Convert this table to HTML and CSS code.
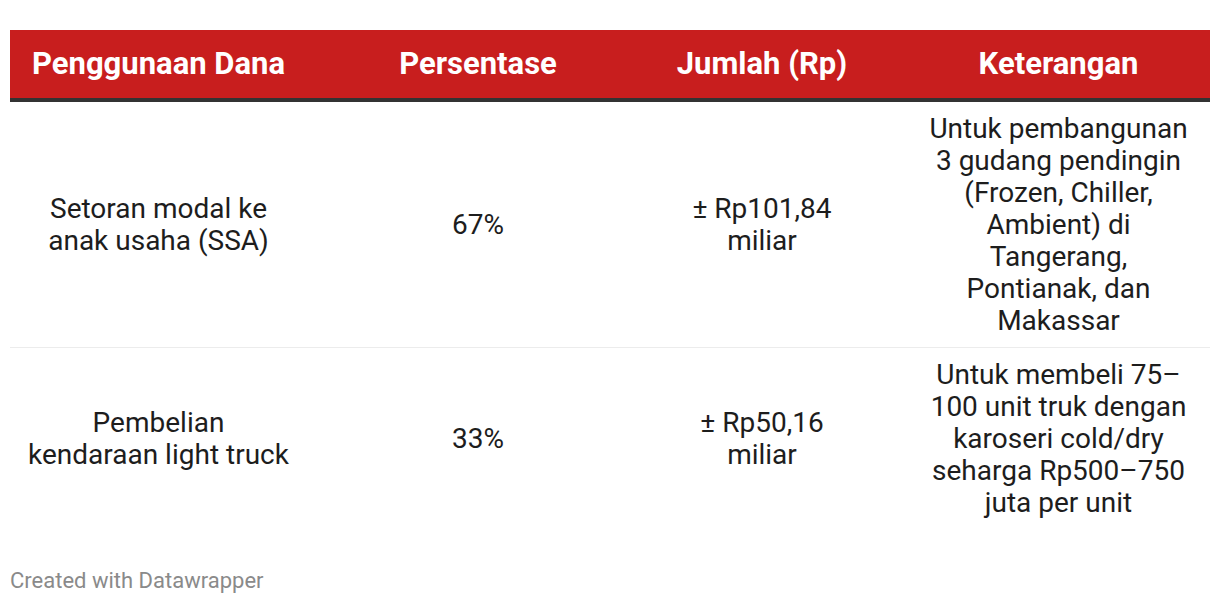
FILE: index.html
```html
<!DOCTYPE html>
<html lang="id">
<head>
<meta charset="utf-8">
<title>Penggunaan Dana</title>
<link rel="stylesheet" href="styles.css">
</head>
<body>
<div class="chart">
  <div class="table">
    <div class="row head">
      <div class="cell c1">Penggunaan Dana</div>
      <div class="cell c2">Persentase</div>
      <div class="cell c3">Jumlah (Rp)</div>
      <div class="cell c4">Keterangan</div>
    </div>
    <div class="row body-row first">
      <div class="cell c1">Setoran modal ke anak usaha (SSA)</div>
      <div class="cell c2">67%</div>
      <div class="cell c3">± Rp101,84 miliar</div>
      <div class="cell c4">Untuk pembangunan 3 gudang pendingin (Frozen, Chiller, Ambient) di Tangerang, Pontianak, dan Makassar</div>
    </div>
    <div class="row body-row">
      <div class="cell c1">Pembelian kendaraan light truck</div>
      <div class="cell c2">33%</div>
      <div class="cell c3">± Rp50,16 miliar</div>
      <div class="cell c4">Untuk membeli 75–100 unit truk dengan karoseri cold/dry seharga Rp500–750 juta per unit</div>
    </div>
  </div>
  <div class="footer">Created with Datawrapper</div>
</div>
</body>
</html>
```

FILE: styles.css
```css
html, body {
  margin: 0;
  padding: 0;
  background: #ffffff;
}

body {
  font-family: Roboto, "Liberation Sans", Arial, sans-serif;
  color: #1d1d1d;
}

.chart {
  padding: 30px 10px 0 10px;
  width: 1200px;
}

.table {
  width: 1200px;
}

.row {
  display: grid;
  grid-template-columns: 297px 342px 226px 335px;
  align-items: center;
}

.cell {
  text-align: center;
  box-sizing: border-box;
}

.c1 { padding: 0 16px; }
.c2 { padding: 0 20px; }
.c3 { padding: 0 21px; }
.c4 { padding: 0 18.5px 0 50.5px; }

.head {
  background: #c81e1e;
  color: #ffffff;
  height: 68px;
  border-bottom: 4px solid #333333;
  font-weight: 700;
  font-size: 31px;
  line-height: 36px;
}

.body-row {
  font-size: 28px;
  line-height: 32px;
  padding: 11px 0 10px 0;
}

.body-row.first {
  border-bottom: 1px solid #ececec;
}

.footer {
  margin-top: 39px;
  font-size: 22px;
  line-height: 26px;
  color: #8a8a8a;
}
```
